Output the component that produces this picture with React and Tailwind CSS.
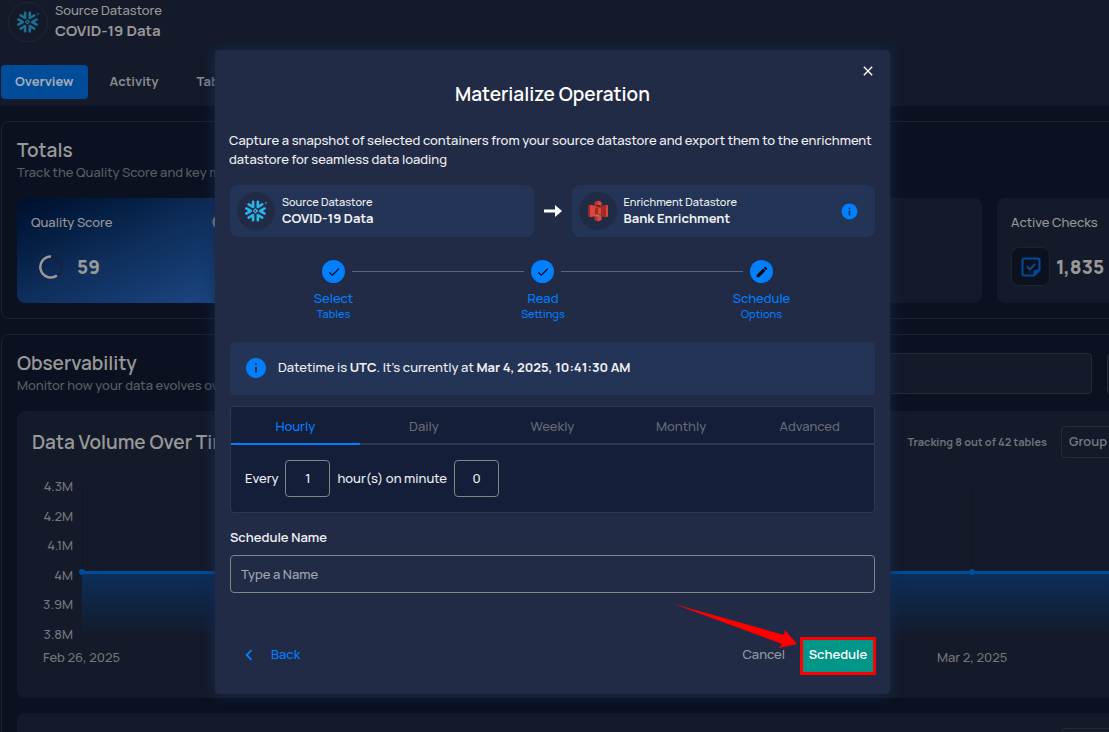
import React from "react";
import { SiSnowflake } from "react-icons/si";
import { MdCheck, MdChevronLeft, MdClose, MdEdit, MdInfo } from "react-icons/md";

const yTicks = ["4.3M", "4.2M", "4.1M", "4M", "3.9M", "3.8M"];
const scheduleTabs = ["Hourly", "Daily", "Weekly", "Monthly", "Advanced"];

function BucketIcon() {
  return (
    <svg viewBox="0 0 24 24" className="size-6" aria-hidden="true">
      <path d="M2 6.500l2-.8v12.600l-2-.8z" fill="#8c2a25" />
      <path d="M4 5.700l8 1.500v9.600l-8 1.500z" fill="#dd463c" />
      <path d="M20 5.700l-8 1.500v9.600l8 1.500z" fill="#9c2c26" />
      <path d="M20 5.700l2 .8v11l-2 .8z" fill="#dd463c" />
      <path d="M12 1.500L8.500 3v4l3.500-1z" fill="#b8372f" />
      <path d="M12 1.500L15.500 3v4L12 6z" fill="#dd463c" />
      <path d="M12 22.500L8.500 21v-4l3.500 1z" fill="#b8372f" />
      <path d="M12 22.500l3.500-1.500v-4L12 18z" fill="#dd463c" />
      <path d="M12 9l3-.5v7l-3-.5z" fill="#dd463c" />
      <path d="M12 9l-3-.5v7l3-.5z" fill="#9c2c26" />
      <path d="M8.500 7L12 6l3.500 1-3.500.8z" fill="#6d1f1b" />
      <path d="M8.500 17l3.500-.8 3.500.8-3.500.8z" fill="#e88a82" />
    </svg>
  );
}

function RightArrow() {
  return (
    <svg viewBox="0 0 20 14" className="h-3.5 w-5" fill="currentColor" aria-hidden="true">
      <path d="M1 5.500h11V1l7 6-7 6V8.500H1z" />
    </svg>
  );
}

function CheckNoteIcon() {
  return (
    <svg viewBox="0 0 20 20" className="size-5" fill="none" stroke="#004c99" strokeWidth="2" aria-hidden="true">
      <path d="M13 18.500H3A1.500 1.500 0 0 1 1.500 17V3A1.500 1.500 0 0 1 3 1.500h14A1.500 1.500 0 0 1 18.500 3v10z" />
      <path d="M13 18.500V15a2 2 0 0 1 2-2h3.500z" fill="#004c99" strokeWidth="1" />
      <path d="M6 9.500l3 3 5-5.500" />
    </svg>
  );
}

function ScoreRing() {
  return (
    <svg viewBox="0 0 24 24" className="size-6" fill="none" strokeWidth="2.5" aria-hidden="true">
      <circle cx="12" cy="12" r="10.500" stroke="#16233f" />
      <path d="M12 1.500a10.500 10.500 0 1 0 6 19" stroke="#999999" />
    </svg>
  );
}

function VolumeChart() {
  return (
    <svg className="h-48 w-full" aria-label="Data volume over time">
      <defs>
        <linearGradient id="area" x1="0" y1="0" x2="0" y2="1">
          <stop offset="0" stopColor="#0b2f5b" />
          <stop offset="1" stopColor="#141a29" />
        </linearGradient>
      </defs>
      <path d="M5.500 12v84M895.500 12v84" stroke="#101624" />
      <rect x="5" y="96" width="1200" height="64" fill="url(#area)" />
      <rect x="5" y="95" width="1200" height="3" fill="#004c99" />
      <circle cx="5" cy="96" r="3" fill="#004c99" />
      <circle cx="895" cy="96" r="3" fill="#004c99" />
    </svg>
  );
}

function Dashboard() {
  return (
    <div className="min-w-[1242px] text-[#999999]">
      <header className="h-[106px] bg-[#141a29]">
        <div className="flex h-[65px] items-start gap-[7px] pl-2 pt-0.5">
          <span className="flex size-10 items-center justify-center rounded-full border border-[#202632] text-[#1a6f92]">
            <SiSnowflake className="size-[22px]" />
          </span>
          <div>
            <p className="text-[13px] leading-[17px]">Source Datastore</p>
            <p className="text-[15px] font-bold leading-6">COVID-19 Data</p>
          </div>
        </div>
        <nav className="flex pl-px text-[13px] font-bold text-[#888b90]">
          <a href="#overview" className="flex h-[34px] items-center rounded bg-[#004c99] px-3.5 text-[#a5adb8]">Overview</a>
          <a href="#activity" className="flex h-[34px] items-center px-[22px]">Activity</a>
          <a href="#tables" className="flex h-[34px] items-center px-4">Tables</a>
        </nav>
      </header>

      <main className="flex flex-col gap-[15px] pl-px pt-[15px]">
        <section className="rounded-lg border border-[#1d222f] p-[15px] pt-[17px]">
          <h2 className="text-[19px] font-semibold leading-[22px]">Totals</h2>
          <p className="text-[13px] leading-[22px] text-[#5b5e66]">Track the Quality Score and key metrics</p>
          <div className="mt-[15px] grid auto-cols-[230px] grid-flow-col gap-[15px]">
            <div className="h-[105px] rounded-lg bg-linear-to-br from-[#000f2c] via-[#0f2f5c] to-[#1d4a8c] pl-3.5 pr-[18px] pt-3.5">
              <div className="flex items-center justify-between text-[13px] leading-5">
                <span>Quality Score</span>
                <MdInfo className="size-[18px]" />
              </div>
              <div className="mt-[23px] flex items-center gap-3.5 pl-2">
                <ScoreRing />
                <span className="text-[19px] font-extrabold leading-6">59</span>
              </div>
            </div>
            <div className="rounded-lg bg-[#141a29]" />
            <div className="rounded-lg bg-[#141a29]" />
            <div className="rounded-lg bg-[#141a29]" />
            <div className="rounded-lg bg-[#141a29] px-3.5 pt-3.5">
              <p className="text-[13px] leading-5">Active Checks</p>
              <div className="mt-[15px] flex items-center gap-1.5">
                <span className="flex size-[39px] items-center justify-center rounded-lg border border-[#1d222f] bg-[#0c1120]">
                  <CheckNoteIcon />
                </span>
                <span className="text-[19px] font-extrabold leading-6">1,835</span>
              </div>
            </div>
          </div>
        </section>

        <section className="rounded-lg border border-[#1d222f] p-[15px] pt-[18px]">
          <div className="flex gap-[15px]">
            <div className="flex-1">
              <h2 className="text-[19px] font-semibold leading-5">Observability</h2>
              <p className="mt-0.5 text-[13px] leading-5 text-[#5b5e66]">Monitor how your data evolves over time</p>
            </div>
            <input aria-label="Search" className="h-[41px] w-[400px] rounded border border-[#262b36] bg-[#141a29]" />
            <input aria-label="Report date" className="h-[41px] w-[119px] rounded border border-[#262b36] bg-[#141a29]" />
          </div>
          <div className="mt-4 h-[287px] rounded-lg bg-[#141a29] p-[15px]">
            <div className="flex h-8 items-center">
              <h3 className="flex-1 text-[19px] font-semibold">Data Volume Over Time</h3>
              <p className="mr-3.5 text-[11px] font-bold text-[#6f7278]">Tracking 8 out of 42 tables</p>
              <button className="h-8 w-[150px] rounded border border-[#262b36] px-[7px] text-left text-[13px] font-semibold text-[#777a80]">Group</button>
            </div>
            <div className="flex pt-[18px] text-[13px] text-[#74777c]">
              <div className="flex h-[168px] w-[41px] flex-col justify-between text-right leading-5">
                {yTicks.map((t) => <span key={t}>{t}</span>)}
              </div>
              <div className="-mr-[15px] ml-1 flex-1"><VolumeChart /></div>
            </div>
            <div className="-mt-[21px] flex pl-[11px] text-[13px] leading-5 text-[#777777]">
              <span className="w-[894px]">Feb 26, 2025</span>
              <span>Mar 2, 2025</span>
            </div>
          </div>
          <div className="mt-[15px] flex h-40 justify-end rounded-lg bg-[#141a29] p-[15px]">
            <span className="h-8 w-[150px] rounded border border-[#262b36]" />
          </div>
        </section>
      </main>
    </div>
  );
}

function StoreCard({ icon, label, name, info }) {
  return (
    <div className="flex h-[52px] flex-1 items-center rounded-lg bg-[#233456] pl-[7px] pr-4">
      <span className="mr-[7px] flex size-[38px] shrink-0 items-center justify-center rounded-full bg-[#222b45]">{icon}</span>
      <div className="flex-1 pb-0.5">
        <p className="text-[11px] leading-4">{label}</p>
        <p className="text-[13px] font-bold leading-4">{name}</p>
      </div>
      {info && <MdInfo className="size-[19px] text-[#007fff]" />}
    </div>
  );
}

function Step({ icon, title, sub }) {
  return (
    <li className="flex w-[23px] flex-col items-center whitespace-nowrap text-[#007fff]">
      <span className="flex size-[23px] items-center justify-center rounded-full bg-[#007fff] text-black">{icon}</span>
      <span className="mt-[5px] text-[13px] leading-5">{title}</span>
      <span className="text-[11px] leading-3">{sub}</span>
    </li>
  );
}

function MaterializeDialog() {
  return (
    <div className="absolute inset-0 flex items-start justify-center pr-1 pt-[50px]">
      <div role="dialog" aria-labelledby="dialog-title" className="relative w-[675px] rounded bg-[#222b45] px-[15px] pb-[19px] pt-8 text-[#f0f1f4] shadow-[0_0_14px_0_#142c50]">
        <button aria-label="Close" className="absolute right-[14px] top-[13px]">
          <MdClose className="size-4 text-white" />
        </button>
        <h1 id="dialog-title" className="text-center text-[19px] font-semibold leading-6 text-white">Materialize Operation</h1>
        <p className="-ml-px mt-[25px] text-[13px] leading-[19px]">
          Capture a snapshot of selected containers from your source datastore and export them to the enrichment datastore for seamless data loading
        </p>

        <div className="mt-4 flex items-center">
          <StoreCard icon={<SiSnowflake className="size-[22px] text-[#29b5e8]" />} label="Source Datastore" name="COVID-19 Data" />
          <span className="flex w-[38px] justify-center text-white"><RightArrow /></span>
          <StoreCard icon={<BucketIcon />} label="Enrichment Datastore" name="Bank Enrichment" info />
        </div>

        <ol className="mt-[23px] flex items-start pl-[92px] pr-[102px]">
          <Step icon={<MdCheck className="size-3.5" />} title="Select" sub="Tables" />
          <li aria-hidden="true" className="mx-[7px] mt-[11px] h-px grow-[172] bg-[#5f6577]" />
          <Step icon={<MdCheck className="size-3.5" />} title="Read" sub="Settings" />
          <li aria-hidden="true" className="mx-[7px] mt-[11px] h-px grow-[181] bg-[#5f6577]" />
          <Step icon={<MdEdit className="size-3.5" />} title="Schedule" sub="Options" />
        </ol>

        <div className="mt-[22px] flex h-[53px] items-center gap-2.5 rounded bg-[#233456] px-3.5 pb-0.5 text-[13px]">
          <MdInfo className="size-6 text-[#007fff]" />
          <p>Datetime is <b>UTC</b>. It’s currently at <b>Mar 4, 2025, 10:41:30 AM</b></p>
        </div>

        <div className="mt-[11px] rounded border border-[#2e3750] bg-[#151e39]">
          <div role="tablist" className="grid h-[38px] grid-cols-5 text-[13px] text-[#666a73]">
            {scheduleTabs.map((t, i) => (
              <button key={t} role="tab" aria-selected={i === 0} className={i === 0 ? "border-b-2 border-[#007fff] pt-[3px] text-[#007fff]" : "border-b-2 border-[#2e3750] pt-[3px]"}>{t}</button>
            ))}
          </div>
          <div className="flex items-center gap-[7px] px-3.5 py-[15px] text-[13px]">
            <label htmlFor="hours">Every</label>
            <input id="hours" defaultValue="1" className="h-[37px] w-[45px] rounded border border-[#82848a] pb-0.5 text-center" />
            <label htmlFor="minute">hour(s) on minute</label>
            <input id="minute" defaultValue="0" className="h-[37px] w-[45px] rounded border border-[#82848a] pb-0.5 text-center" />
          </div>
        </div>

        <label htmlFor="schedule-name" className="mt-[15px] block text-[13px] font-semibold leading-[19px]">Schedule Name</label>
        <input id="schedule-name" placeholder="Type a Name" className="mt-2 block h-[38px] w-full rounded border border-[#82848a] px-2.5 text-[13px] placeholder:text-[#a3a7b1]" />

        <div className="mt-11 flex h-[38px] items-center text-[13px]">
          <button className="flex items-center gap-[11px] pb-[3px] pl-2 text-[#007fff]"><MdChevronLeft className="size-[22px]" />Back</button>
          <button className="ml-auto mr-[15px] pb-[3px] text-[#969aa4]">Cancel</button>
          <button className="-mr-px h-[38px] w-[76px] border-[3px] border-[#ff0000] bg-[#009688] pb-[3px] font-semibold text-white">Schedule</button>
        </div>
        <svg viewBox="0 0 124 48" className="absolute bottom-[44px] right-[93px] h-12 w-[124px]" aria-hidden="true">
          <path d="M1 2L111 33l1-5 12 14-18 4 3-4z" fill="#ff0000" />
        </svg>
      </div>
    </div>
  );
}

export default function App() {
  return (
    <div className="relative h-screen overflow-hidden bg-[#0b1120] font-[Manrope,Inter,sans-serif] font-medium">
      <Dashboard />
      <MaterializeDialog />
    </div>
  );
}
